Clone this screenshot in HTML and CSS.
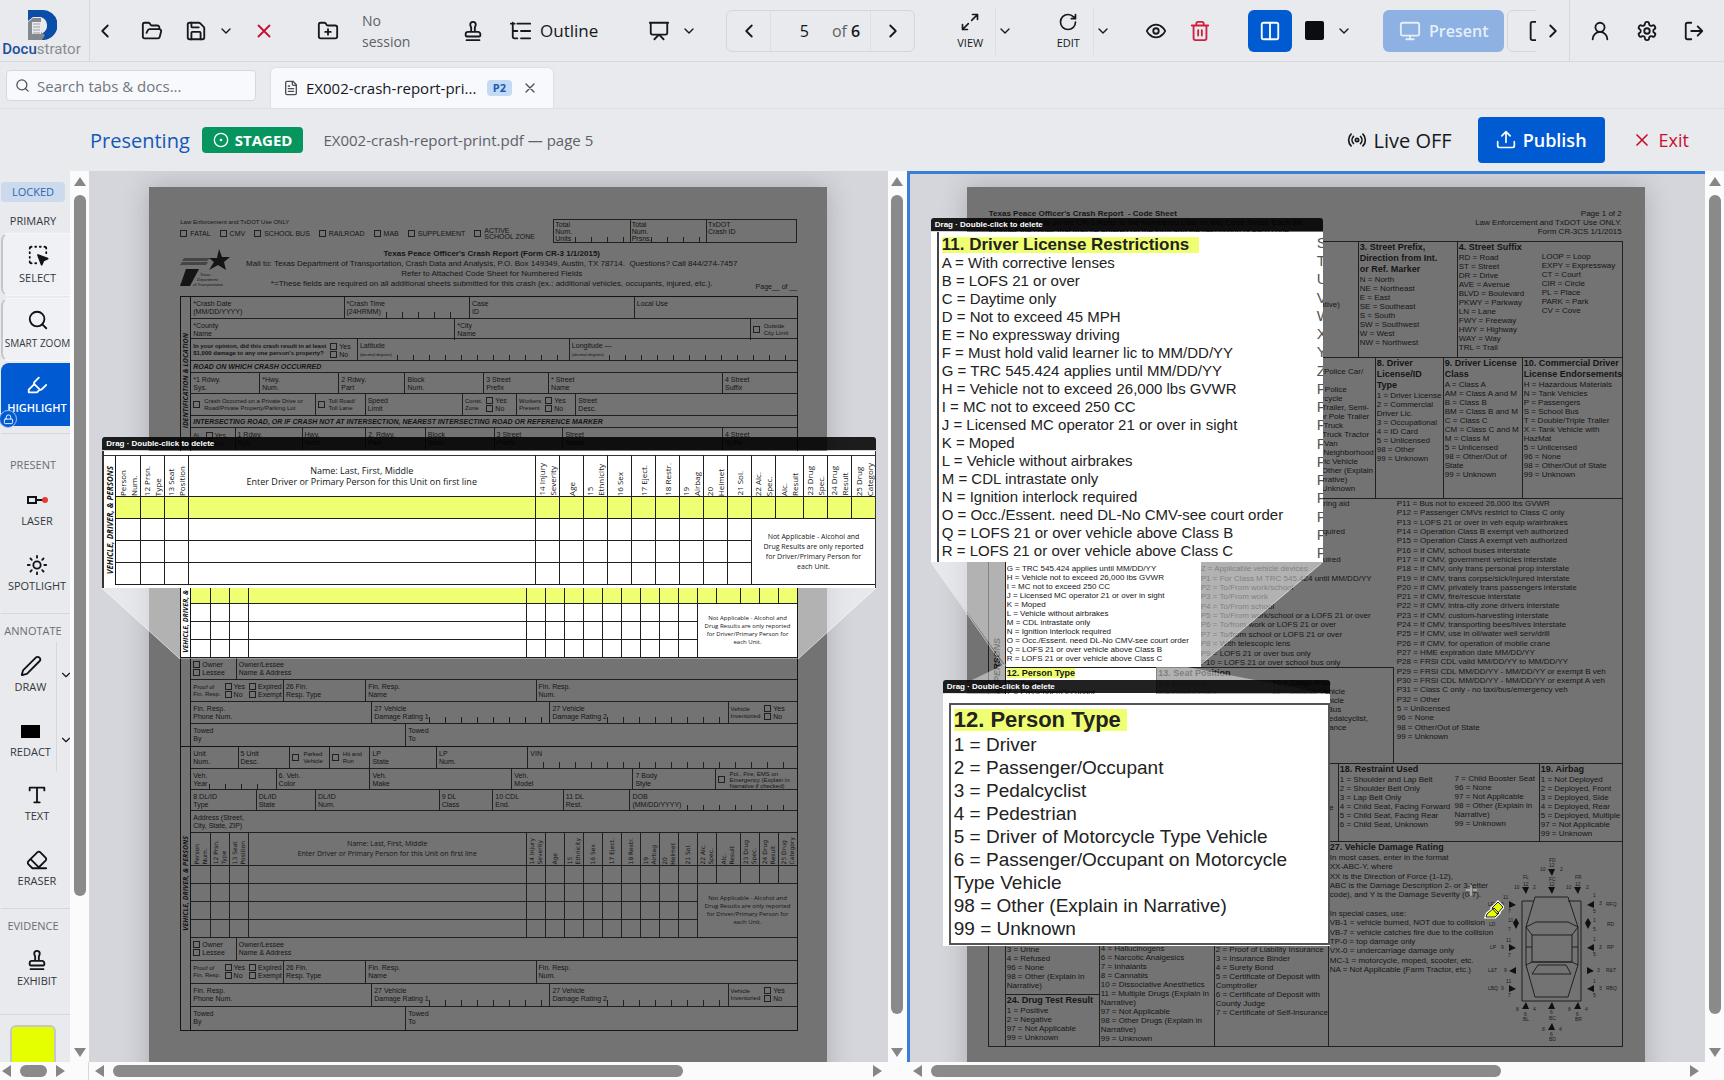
FILE: index.html
```html
<!DOCTYPE html>
<html lang="en">
<head>
    <meta charset="UTF-8">
    <meta name="viewport" content="width=device-width, initial-scale=1.0">
    <title>Docustrator</title>
    <link rel="stylesheet" href="styles.css">
</head>
<body>

<!-- icon sprite -->
<svg class="sprite" aria-hidden="true">
    <symbol id="i-left" viewBox="0 0 24 24"><path d="m15 18-6-6 6-6"/></symbol>
    <symbol id="i-right" viewBox="0 0 24 24"><path d="m9 18 6-6-6-6"/></symbol>
    <symbol id="i-down" viewBox="0 0 24 24"><path d="m6 9 6 6 6-6"/></symbol>
    <symbol id="i-x" viewBox="0 0 24 24"><path d="M18 6 6 18M6 6l12 12"/></symbol>
    <symbol id="i-open" viewBox="0 0 24 24"><path d="m6 14 1.5-2.9A2 2 0 0 1 9.240 10H20a2 2 0 0 1 1.940 2.500l-1.540 6a2 2 0 0 1-1.950 1.500H4a2 2 0 0 1-2-2V5a2 2 0 0 1 2-2h3.900a2 2 0 0 1 1.690.9l.81 1.200a2 2 0 0 0 1.670.9H18a2 2 0 0 1 2 2v2"/></symbol>
    <symbol id="i-save" viewBox="0 0 24 24"><path d="M15.200 3a2 2 0 0 1 1.400.6l3.800 3.800a2 2 0 0 1 .6 1.400V19a2 2 0 0 1-2 2H5a2 2 0 0 1-2-2V5a2 2 0 0 1 2-2z"/><path d="M17 21v-7a1 1 0 0 0-1-1H8a1 1 0 0 0-1 1v7M7 3v4a1 1 0 0 0 1 1h7"/></symbol>
    <symbol id="i-newfolder" viewBox="0 0 24 24"><path d="M12 10v6M9 13h6M20 20a2 2 0 0 0 2-2V8a2 2 0 0 0-2-2h-7.900a2 2 0 0 1-1.690-.9L9.600 3.900A2 2 0 0 0 7.930 3H4a2 2 0 0 0-2 2v13a2 2 0 0 0 2 2Z"/></symbol>
    <symbol id="i-stamp" viewBox="0 0 24 24"><path d="M5 22h14M19.270 13.730A2.500 2.500 0 0 0 17.500 13h-11A2.500 2.500 0 0 0 4 15.500V17a1 1 0 0 0 1 1h14a1 1 0 0 0 1-1v-1.500c0-.66-.26-1.300-.73-1.770ZM14 13V8.500C14 7 15 7 15 5a3 3 0 0 0-3-3c-1.660 0-3 1-3 3s1 2 1 3.500V13"/></symbol>
    <symbol id="i-tree" viewBox="0 0 24 24"><path d="M22 12H12M22 4H8M22 20H12M3 3v7c0 1.100.9 2 2 2h3M3 10v8c0 1.100.9 2 2 2h3M1 4h4"/></symbol>
    <symbol id="i-board" viewBox="0 0 24 24"><path d="M2 3h20M21 3v11a2 2 0 0 1-2 2H5a2 2 0 0 1-2-2V3M7 21l5-5 5 5"/></symbol>
    <symbol id="i-expand" viewBox="0 0 24 24"><path d="M15 3h6v6M9 21H3v-6M21 3l-7 7M3 21l7-7"/></symbol>
    <symbol id="i-rotate" viewBox="0 0 24 24"><path d="M21 12a9 9 0 1 1-9-9c2.520 0 4.930 1 6.740 2.740L21 8M21 3v5h-5"/></symbol>
    <symbol id="i-eye" viewBox="0 0 24 24"><path d="M2 12s3-7 10-7 10 7 10 7-3 7-10 7-10-7-10-7Z"/><circle cx="12" cy="12" r="3"/></symbol>
    <symbol id="i-trash" viewBox="0 0 24 24"><path d="M3 6h18M19 6v14a2 2 0 0 1-2 2H7a2 2 0 0 1-2-2V6M8 6V4a2 2 0 0 1 2-2h4a2 2 0 0 1 2 2v2M10 11v6M14 11v6"/></symbol>
    <symbol id="i-columns" viewBox="0 0 24 24"><rect x="3" y="3" width="18" height="18" rx="2"/><path d="M12 3v18"/></symbol>
    <symbol id="i-monitor" viewBox="0 0 24 24"><rect x="2" y="3" width="20" height="14" rx="2"/><path d="M8 21h8M12 17v4"/></symbol>
    <symbol id="i-tablet" viewBox="0 0 24 24"><rect x="4" y="2" width="16" height="20" rx="2"/><path d="M12 18h.01"/></symbol>
    <symbol id="i-user" viewBox="0 0 24 24"><circle cx="12" cy="8" r="5"/><path d="M20 21a8 8 0 0 0-16 0"/></symbol>
    <symbol id="i-gear" viewBox="0 0 24 24"><path d="M12.220 2h-.44a2 2 0 0 0-2 2v.18a2 2 0 0 1-1 1.730l-.43.25a2 2 0 0 1-2 0l-.15-.08a2 2 0 0 0-2.730.73l-.22.38a2 2 0 0 0 .73 2.730l.15.1a2 2 0 0 1 1 1.720v.51a2 2 0 0 1-1 1.740l-.15.09a2 2 0 0 0-.73 2.730l.22.38a2 2 0 0 0 2.730.73l.15-.08a2 2 0 0 1 2 0l.43.25a2 2 0 0 1 1 1.730V20a2 2 0 0 0 2 2h.44a2 2 0 0 0 2-2v-.18a2 2 0 0 1 1-1.730l.43-.25a2 2 0 0 1 2 0l.15.08a2 2 0 0 0 2.730-.73l.22-.39a2 2 0 0 0-.73-2.730l-.15-.08a2 2 0 0 1-1-1.740v-.5a2 2 0 0 1 1-1.740l.15-.09a2 2 0 0 0 .73-2.730l-.22-.38a2 2 0 0 0-2.730-.73l-.15.08a2 2 0 0 1-2 0l-.43-.25a2 2 0 0 1-1-1.730V4a2 2 0 0 0-2-2z"/><circle cx="12" cy="12" r="3"/></symbol>
    <symbol id="i-logout" viewBox="0 0 24 24"><path d="M9 21H5a2 2 0 0 1-2-2V5a2 2 0 0 1 2-2h4M16 17l5-5-5-5M21 12H9"/></symbol>
    <symbol id="i-search" viewBox="0 0 24 24"><circle cx="11" cy="11" r="8"/><path d="m21 21-4.300-4.300"/></symbol>
    <symbol id="i-file" viewBox="0 0 24 24"><path d="M15 2H6a2 2 0 0 0-2 2v16a2 2 0 0 0 2 2h12a2 2 0 0 0 2-2V7ZM14 2v4a2 2 0 0 0 2 2h4M10 9H8M16 13H8M16 17H8"/></symbol>
    <symbol id="i-dot" viewBox="0 0 24 24"><circle cx="12" cy="12" r="10"/><circle cx="12" cy="12" r="1"/></symbol>
    <symbol id="i-radio" viewBox="0 0 24 24"><path d="M4.900 19.100C1 15.200 1 8.800 4.900 4.900M7.800 16.200c-2.300-2.300-2.300-6.100 0-8.500M16.200 7.800c2.300 2.300 2.300 6.100 0 8.500M19.100 4.900C23 8.800 23 15.100 19.100 19"/><circle cx="12" cy="12" r="2"/></symbol>
    <symbol id="i-upload" viewBox="0 0 24 24"><path d="M2 14v5a2 2 0 0 0 2 2h16a2 2 0 0 0 2-2v-5M17 7l-5-5-5 5M12 2v13"/></symbol>
    <symbol id="i-select" viewBox="0 0 24 24"><path d="M5 3a2 2 0 0 0-2 2M19 3a2 2 0 0 1 2 2M5 21a2 2 0 0 1-2-2M9 3h1M14 3h1M3 9v1M3 14v1M21 9v1M9 21h1"/><path class="solid" d="m12 12 10.500 4-4.500 1.800L16 22.500z"/></symbol>
    <symbol id="i-highlight" viewBox="0 0 24 24"><path d="m9 11-6 6v3h9l3-3M22 12l-4.600 4.600a2 2 0 0 1-2.800 0l-5.200-5.200a2 2 0 0 1 0-2.800L14 4"/></symbol>
    <symbol id="i-lock" viewBox="0 0 24 24"><rect x="3" y="11" width="18" height="10" rx="2"/><path d="M7 11V7a5 5 0 0 1 10 0v4"/></symbol>
    <symbol id="i-sun" viewBox="0 0 24 24"><circle cx="12" cy="12" r="4"/><path d="M12 2v2M12 20v2M4.900 4.900l1.400 1.400M17.700 17.700l1.400 1.400M2 12h2M20 12h2M6.300 17.700l-1.400 1.400M19.100 4.900l-1.400 1.400"/></symbol>
    <symbol id="i-pencil" viewBox="0 0 24 24"><path d="M21.200 6.800a2.800 2.800 0 0 0-4-4L3.800 16.200a2 2 0 0 0-.5.8L2 21.400a.5.5 0 0 0 .6.6L7 20.700a2 2 0 0 0 .8-.5z"/></symbol>
    <symbol id="i-type" viewBox="0 0 24 24"><path d="M4 7V4h16v3M9 20h6M12 4v16"/></symbol>
    <symbol id="i-eraser" viewBox="0 0 24 24"><path d="m7 21-4.300-4.300c-1-1-1-2.500 0-3.400l9.600-9.600c1-1 2.500-1 3.400 0l5.600 5.600c1 1 1 2.500 0 3.400L13 21M22 21H7M5 11l9 9"/></symbol>
</svg>

<div class="app">

<header class="topbar">
    <a class="brand" href="#">
        <svg class="brand-mark" viewBox="0 0 30 32">
            <path d="M1 1h13a15 15 0 0 1 3 30h-5l4-7a9 9 0 0 0-2-16H6L1 12z" fill="#0b4ea8"/>
            <path d="M1 13 6 9h8v14l4 3-3 5H1z" fill="#85898e"/>
            <path d="M5 13h9v12H5z" fill="#e8eaed"/>
            <path d="M6 15h7M6 18h7M6 21h7M6 24h7" stroke="#9a9ea3" stroke-width="1"/>
        </svg>
        <span class="brand-name"><b>Docu</b>strator</span>
    </a>
    <div class="tools">
        <button class="tool narrow" aria-label="Back"><svg class="icon"><use href="#i-left"/></svg></button>
        <div class="group">
            <button class="tool" aria-label="Open"><svg class="icon"><use href="#i-open"/></svg></button>
            <button class="tool" aria-label="Save"><svg class="icon"><use href="#i-save"/></svg></button>
            <button class="caret" aria-label="Save options"><svg class="icon"><use href="#i-down"/></svg></button>
            <button class="tool danger close-doc" aria-label="Close"><svg class="icon"><use href="#i-x"/></svg></button>
        </div>
        <div class="group">
            <button class="tool" aria-label="New session"><svg class="icon"><use href="#i-newfolder"/></svg></button>
            <span class="session">No session</span>
        </div>
        <div class="group wide">
            <button class="tool" aria-label="Stamp"><svg class="icon"><use href="#i-stamp"/></svg></button>
            <button class="outline-btn"><svg class="icon"><use href="#i-tree"/></svg>Outline</button>
        </div>
        <div class="group wide">
            <button class="tool" aria-label="Presentation"><svg class="icon"><use href="#i-board"/></svg></button>
            <button class="caret" aria-label="Presentation options"><svg class="icon"><use href="#i-down"/></svg></button>
        </div>
        <div class="pager">
            <button aria-label="Previous page"><svg class="icon"><use href="#i-left"/></svg></button>
            <div class="pager-value"><input type="text" value="5" aria-label="Page"><span>of <b>6</b></span></div>
            <button aria-label="Next page"><svg class="icon"><use href="#i-right"/></svg></button>
        </div>
        <div class="group stacked-group">
            <button class="stacked"><svg class="icon"><use href="#i-expand"/></svg>VIEW</button>
            <button class="caret ruled" aria-label="View options"><svg class="icon"><use href="#i-down"/></svg></button>
        </div>
        <div class="group stacked-group">
            <button class="stacked"><svg class="icon"><use href="#i-rotate"/></svg>EDIT</button>
            <button class="caret ruled" aria-label="Edit options"><svg class="icon"><use href="#i-down"/></svg></button>
        </div>
        <div class="group spaced">
            <button class="tool" aria-label="Show"><svg class="icon"><use href="#i-eye"/></svg></button>
            <button class="tool danger trash" aria-label="Delete"><svg class="icon"><use href="#i-trash"/></svg></button>
        </div>
        <div class="group spaced">
            <button class="tool active" aria-label="Split view"><svg class="icon"><use href="#i-columns"/></svg></button>
            <button class="tool" aria-label="Blackout"><span class="black-square"></span></button>
            <button class="caret" aria-label="Blackout options"><svg class="icon"><use href="#i-down"/></svg></button>
        </div>
        <div class="group clip">
            <button class="present-btn" disabled><svg class="icon"><use href="#i-monitor"/></svg>Present</button>
            <button class="tablet-btn" aria-label="Tablet"><svg class="icon"><use href="#i-tablet"/></svg></button>
        </div>
    </div>
    <button class="tool narrow" aria-label="More tools"><svg class="icon"><use href="#i-right"/></svg></button>
    <nav class="account">
        <button class="tool" aria-label="Account"><svg class="icon"><use href="#i-user"/></svg></button>
        <button class="tool" aria-label="Settings"><svg class="icon"><use href="#i-gear"/></svg></button>
        <button class="tool" aria-label="Log out"><svg class="icon"><use href="#i-logout"/></svg></button>
    </nav>
</header>

<div class="tabs">
    <label class="search"><svg class="icon"><use href="#i-search"/></svg><input type="text" placeholder="Search tabs &amp; docs..." aria-label="Search tabs and docs"></label>
    <div class="tab">
        <svg class="icon"><use href="#i-file"/></svg>
        <a href="#">EX002-crash-report-pri...</a>
        <span class="tab-badge">P2</span>
        <button aria-label="Close tab"><svg class="icon"><use href="#i-x"/></svg></button>
    </div>
</div>

<div class="presenting">
    <strong>Presenting</strong>
    <span class="staged"><svg class="icon"><use href="#i-dot"/></svg>STAGED</span>
    <span class="doc-name">EX002-crash-report-print.pdf — page 5</span>
    <button class="live"><svg class="icon"><use href="#i-radio"/></svg>Live OFF</button>
    <button class="publish"><svg class="icon"><use href="#i-upload"/></svg>Publish</button>
    <button class="exit"><svg class="icon"><use href="#i-x"/></svg>Exit</button>
</div>

<main class="workspace">

    <!-- tool palette -->
    <aside class="palette">
        <div class="palette-body">
            <span class="locked">LOCKED</span>
            <h2 class="primary">PRIMARY</h2>
            <button class="pal raised"><svg class="icon"><use href="#i-select"/></svg>SELECT</button>
            <button class="pal raised small-label"><svg class="icon"><use href="#i-search"/></svg>SMART ZOOM</button>
            <button class="pal on"><svg class="icon"><use href="#i-highlight"/></svg>HIGHLIGHT<span class="lock"><svg class="icon"><use href="#i-lock"/></svg></span></button>
            <section>
                <h2 class="tall">PRESENT</h2>
                <button class="pal"><svg class="laser" viewBox="0 0 22 22"><rect x="2" y="8" width="8" height="6"/><path d="M10 11h7"/><circle cx="19" cy="11" r="2"/></svg>LASER</button>
                <button class="pal"><svg class="icon"><use href="#i-sun"/></svg>SPOTLIGHT</button>
            </section>
            <section>
                <h2>ANNOTATE</h2>
                <div class="split"><button class="pal"><svg class="icon"><use href="#i-pencil"/></svg>DRAW</button><button class="pal-caret" aria-label="Draw options"><svg class="icon"><use href="#i-down"/></svg></button></div>
                <div class="split"><button class="pal"><span class="redact"></span>REDACT</button><button class="pal-caret" aria-label="Redact options"><svg class="icon"><use href="#i-down"/></svg></button></div>
                <button class="pal"><svg class="icon"><use href="#i-type"/></svg>TEXT</button>
                <button class="pal"><svg class="icon"><use href="#i-eraser"/></svg>ERASER</button>
            </section>
            <section>
                <h2>EVIDENCE</h2>
                <button class="pal"><svg class="icon"><use href="#i-stamp"/></svg>EXHIBIT</button>
            </section>
            <section class="swatches"><button class="swatch" aria-label="Colour"></button></section>
        </div>
        <div class="bar vertical"><i></i><div class="track"><span class="thumb palette-y"></span></div><i></i></div>
        <div class="bar horizontal small"><i></i><div class="track"><span class="thumb palette-x"></span></div><i></i></div>
    </aside>

    <!-- left pane: crash report form -->
    <section class="pane">
        <div class="stage">
            <article class="sheet form">
                <div class="form-head">
                    <div class="use-only">
                        <div>
                            <p>Law Enforcement and TxDOT Use ONLY</p>
                            <div class="flags">
                                <label><input type="checkbox">FATAL</label>
                                <label><input type="checkbox">CMV</label>
                                <label><input type="checkbox">SCHOOL BUS</label>
                                <label><input type="checkbox">RAILROAD</label>
                                <label><input type="checkbox">MAB</label>
                                <label><input type="checkbox">SUPPLEMENT</label>
                                <label><input type="checkbox"><span>ACTIVE<br>SCHOOL ZONE</span></label>
                            </div>
                        </div>
                        <div class="totals">
                            <div>Total<br>Num.<br>Units<span class="ticks"></span></div>
                            <div>Total<br>Num.<br>Prsns.<span class="ticks"></span></div>
                            <div>TxDOT<br>Crash ID</div>
                        </div>
                    </div>
                    <div class="title">
                        <svg class="txdot" viewBox="0 0 52 38">
                            <path d="M4 9h26l-3 3H2zM2 13h26l-2 3H0z" fill="#454545"/>
                            <path d="m39 0 3 8h8l-6 5 2 8-8-5-9 5 5-8-5-4h8z" fill="#151515"/>
                            <path d="M6 20h13l-9 17H0z" fill="#151515"/>
                            <text x="20" y="27">Texas</text><text x="17" y="32">Department</text><text x="13" y="37">of Transportation</text>
                        </svg>
                        <div class="title-text">
                            <h1>Texas Peace Officer's Crash Report (Form CR-3 1/1/2015)</h1>
                            <p>Mail to: Texas Department of Transportation, Crash Data and Analysis, P.O. Box 149349, Austin, TX 78714.&nbsp; Questions? Call 844/274-7457</p>
                            <p>Refer to Attached Code Sheet for Numbered Fields</p>
                            <p>*=These fields are required on all additional sheets submitted for this crash (ex.: additional vehicles, occupants, injured, etc.).</p>
                        </div>
                        <span class="page-of">Page__ of __</span>
                    </div>
                </div>

                <div class="frame">
                    <div class="part ident">
                        <div class="spine"><span>IDENTIFICATION &amp; LOCATION</span></div>
                        <div class="rows">
                            <div class="row r-date"><div>*Crash Date<br>(MM/DD/YYYY)</div><div>*Crash Time<br>(24HRMM)<span class="ticks"></span></div><div>Case<br>ID</div><div>Local Use</div></div>
                            <div class="row r-county"><div>*County<br>Name</div><div>*City<br>Name</div><div class="tight"><input type="checkbox" aria-label="Outside city limit"><span>Outside<br>City Limit</span></div></div>
                            <div class="row r-opinion"><div class="tight"><b>In your opinion, did this crash result in at least<br>$1,000 damage to any one person's property?</b><span class="yesno"><label><input type="checkbox">Yes</label><label><input type="checkbox">No</label></span></div><div>Latitude<br><small>(decimal degrees)</small><span class="ticks"></span></div><div>Longitude —<br><small>(decimal degrees)</small><span class="ticks"></span></div></div>
                            <h3>ROAD ON WHICH CRASH OCCURRED</h3>
                            <div class="row r-rdwy"><div>*1 Rdwy.<br>Sys.</div><div>*Hwy.<br>Num.</div><div>2 Rdwy.<br>Part</div><div>Block<br>Num.</div><div>3 Street<br>Prefix</div><div>* Street<br>Name</div><div>4 Street<br>Suffix</div></div>
                            <div class="row r-private"><div class="tight"><input type="checkbox" aria-label="Private drive"><span>Crash Occurred on a Private Drive or<br>Road/Private Property/Parking Lot</span></div><div class="tight"><input type="checkbox" aria-label="Toll road"><span>Toll Road/<br>Toll Lane</span></div><div>Speed<br>Limit</div><div class="tight"><span>Const.<br>Zone</span><span class="yesno"><label><input type="checkbox">Yes</label><label><input type="checkbox">No</label></span></div><div class="tight"><span>Workers<br>Present</span><span class="yesno"><label><input type="checkbox">Yes</label><label><input type="checkbox">No</label></span></div><div>Street<br>Desc.</div></div>
                            <h3>INTERSECTING ROAD, OR IF CRASH NOT AT INTERSECTION, NEAREST INTERSECTING ROAD OR REFERENCE MARKER</h3>
                            <div class="row r-at"><div class="tight"><span>At<br>Int.</span><span class="yesno"><label><input type="checkbox">Yes</label><label><input type="checkbox">No</label></span></div><div>1 Rdwy.<br>Sys.</div><div>Hwy.<br>Num.</div><div>2. Rdwy.<br>Part</div><div>Block<br>Num.</div><div>3 Street<br>Prefix</div><div>Street<br>Name</div><div>4 Street<br>Suffix</div></div>
                        </div>
                    </div>

                    <div class="part lit">
                        <div class="spine"><span>VEHICLE, DRIVER, &amp; PERSONS</span></div>
                        <div class="rows" data-clone="persons"></div>
                    </div>
                    <div class="part">
                        <div class="spine"></div>
                        <div class="rows" data-clone="finance"></div>
                    </div>

                    <div class="part vehicle">
                        <div class="spine"><span>VEHICLE, DRIVER, &amp; PERSONS</span></div>
                        <div class="rows">
                            <div class="row r-unit"><div>Unit<br>Num.</div><div>5 Unit<br>Desc.</div><div class="tight"><input type="checkbox" aria-label="Parked vehicle"><span>Parked<br>Vehicle</span></div><div class="tight"><input type="checkbox" aria-label="Hit and run"><span>Hit and<br>Run</span></div><div>LP<br>State</div><div>LP<br>Num.</div><div>VIN<span class="ticks"></span></div></div>
                            <div class="row r-veh"><div>Veh.<br>Year<span class="ticks"></span></div><div>6. Veh.<br>Color</div><div>Veh.<br>Make</div><div>Veh.<br>Model</div><div>7 Body<br>Style</div><div class="tight"><input type="checkbox" aria-label="Emergency"><span>Pol., Fire, EMS on<br>Emergency (Explain in<br>Narrative if checked)</span></div></div>
                            <div class="row r-dl"><div>8 DL/ID<br>Type</div><div>DL/ID<br>State</div><div>DL/ID<br>Num.</div><div>9 DL<br>Class</div><div>10 CDL<br>End.</div><div>11 DL<br>Rest.</div><div>DOB<br>(MM/DD/YYYY)<span class="ticks"></span></div></div>
                            <div class="row"><div>Address (Street,<br>City, State, ZIP)</div></div>
                            <div data-clone="persons"></div>
                            <div data-clone="finance"></div>
                        </div>
                    </div>
                </div>

                <!-- zoom callout and its beam -->
                <svg class="beam beam-form" viewBox="0 0 774 71"><path d="M0 0H78V71ZM774 0H696V71Z"/><path class="edge" d="M0 0 78 71H696L774 0"/></svg>
                <div class="callout callout-form">
                    <header>Drag · Double-click to delete</header>
                    <div class="callout-body">
                        <div class="spine"><span>VEHICLE, DRIVER, &amp; PERSONS</span></div>
                        <div class="rows" data-clone="persons"></div>
                    </div>
                </div>
            </article>
        </div>
        <div class="bar vertical"><i></i><div class="track"><span class="thumb pane-y"></span></div><i></i></div>
        <div class="bar horizontal"><i></i><div class="track"><span class="thumb pane-x"></span></div><i></i></div>
    </section>

    <!-- right pane: code sheet -->
    <section class="pane focused">
        <div class="stage">
            <article class="sheet codes">
                <div class="codes-head">
                    <p><b>Texas Peace Officer's Crash Report &nbsp;- Code Sheet</b><br>Numbered Fields on the CR-3 Refer to the Numbered Lists on this Code Sheet. Each list<br>includes the codes that may be entered on the form and the description of each code.</p>
                    <p>Page 1 of 2<br>Law Enforcement and TxDOT Use ONLY.<br>Form CR-3CS 1/1/2015</p>
                </div>
                <div class="code-frame">
                    <div class="code-spine"><span>VEHICLE, DRIVER, AND PERSONS</span></div>
                    <div class="code-rows">
                        <div class="code-row c-street">
                            <div class="cell explain">Narrative)</div>
                            <div class="cell"><h4>3. Street Prefix,<br>Direction from Int.<br>or Ref. Marker</h4>N = North<br>NE = Northeast<br>E = East<br>SE = Southeast<br>S = South<br>SW = Southwest<br>W = West<br>NW = Northwest</div>
                            <div class="cell pair"><div><h4>4. Street Suffix</h4>RD = Road<br>ST = Street<br>DR = Drive<br>AVE = Avenue<br>BLVD = Boulevard<br>PKWY = Parkway<br>LN = Lane<br>FWY = Freeway<br>HWY = Highway<br>WAY = Way<br>TRL = Trail</div><div class="second">LOOP = Loop<br>EXPY = Expressway<br>CT = Court<br>CIR = Circle<br>PL = Place<br>PARK = Park<br>CV = Cove</div></div>
                        </div>
                        <div class="code-row c-license">
                            <div class="cell body-style">PC = Police Car/<br>Truck<br>PM = Police<br>Motorcycle<br>TL = Trailer, Semi-<br>Trlr, or Pole Trailer<br>TR = Truck<br>TT = Truck Tractor<br>VN = Van<br>EV = Neighborhood<br>Electric Vehicle<br>98 = Other (Explain<br>in Narrative)<br>99 = Unknown</div>
                            <div class="cell"><h4>8. Driver<br>License/ID<br>Type</h4>1 = Driver License<br>2 = Commercial<br>Driver Lic.<br>3 = Occupational<br>4 = ID Card<br>5 = Unlicensed<br>98 = Other<br>99 = Unknown</div>
                            <div class="cell"><h4>9. Driver License<br>Class</h4>A = Class A<br>AM = Class A and M<br>B = Class B<br>BM = Class B and M<br>C = Class C<br>CM = Class C and M<br>M = Class M<br>5 = Unlicensed<br>98 = Other/Out of<br>State<br>99 = Unknown</div>
                            <div class="cell"><h4>10. Commercial Driver<br>License Endorsements</h4>H = Hazardous Materials<br>N = Tank Vehicles<br>P = Passengers<br>S = School Bus<br>T = Double/Triple Trailer<br>X = Tank Vehicle with<br>HazMat<br>5 = Unlicensed<br>96 = None<br>98 = Other/Out of State<br>99 = Unknown</div>
                        </div>
                        <div class="code-row c-restrict">
                            <div class="restrict-left">
                                <div class="restrict-top">
                                    <div class="cell bright"><h4>11. Driver License Restrictions</h4>A = With corrective lenses<br>B = LOFS 21 or over<br>C = Daytime only<br>D = Not to exceed 45 MPH<br>E = No expressway driving<br>F = Must hold valid learner lic to MM/DD/YY<br>G = TRC 545.424 applies until MM/DD/YY<br>H = Vehicle not to exceed 26,000 lbs GVWR<br>I = MC not to exceed 250 CC<br>J = Licensed MC operator 21 or over in sight<br>K = Moped<br>L = Vehicle without airbrakes<br>M = CDL intrastate only<br>N = Ignition interlock required<br>O = Occ./Essent. need DL-No CMV-see court order<br>Q = LOFS 21 or over vehicle above Class B<br>R = LOFS 21 or over vehicle above Class C</div>
                                    <ul class="spread">
                                        <li>S = Outside rearview mirror or hearing aid</li><li>T = Automatic transmission</li><li>U = Applicable prosthetic devices</li><li>V = Medical Variance document required</li><li>W = Power steering</li><li>X = Vehicle restriction</li><li>Y = Valid TX vision or limb cert required</li><li>Z = Applicable vehicle devices</li><li>P1 = For Class M TRC 545.424 until MM/DD/YY</li><li>P2 = To/From work/school</li><li>P3 = To/From work</li><li>P4 = To/From school</li><li>P5 = To/From work/school or a LOFS 21 or over</li><li>P6 = To/from work or LOFS 21 or over</li><li>P7 = To/from school or LOFS 21 or over</li><li>P8 = With telescopic lens</li><li>P9 = LOFS 21 or over bus only</li><li>P10 = LOFS 21 or over school bus only</li>
                                    </ul>
                                </div>
                                <div class="restrict-bottom">
                                    <div class="cell bright"><h4><mark>12. Person Type</mark></h4>1 = Driver<br>2 = Passenger/Occupant</div>
                                    <div class="cell pair"><div><h4>13. Seat Position</h4>1 = Front Left<br>2 = Front Center</div><div class="second">10 = Cargo Area<br>11 = Outside Vehicle<br>12 = Trailing Vehicle<br>13 = Other in a Bus<br>14 = Pass. on Pedalcyclist,<br>or other Conveyance<br>98 = (Explain in</div></div>
                                </div>
                            </div>
                            <ul class="spread p-list">
                                <li>P11 = Bus not to exceed 26,000 lbs GVWR</li><li>P12 = Passenger CMVs restrict to Class C only</li><li>P13 = LOFS 21 or over in veh equip w/airbrakes</li><li>P14 = Operation Class B exempt veh authorized</li><li>P15 = Operation Class A exempt veh authorized</li><li>P16 = If CMV, school buses interstate</li><li>P17 = If CMV, government vehicles interstate</li><li>P18 = If CMV, only trans personal prop interstate</li><li>P19 = If CMV, trans corpse/sick/injured interstate</li><li>P20 = If CMV, privately trans passengers interstate</li><li>P21 = If CMV, fire/rescue interstate</li><li>P22 = If CMV, intra-city zone drivers interstate</li><li>P23 = If CMV, custom-harvesting interstate</li><li>P24 = If CMV, transporting bees/hives interstate</li><li>P25 = If CMV, use in oil/water well serv/drill</li><li>P26 = If CMV, for operation of mobile crane</li><li>P27 = HME expiration date MM/DD/YY</li><li>P28 = FRSI CDL valid MM/DD/YY to MM/DD/YY</li><li>P29 = FRSI CDL MM/DD/YY - MM/DD/YY or exempt B veh</li><li>P30 = FRSI CDL MM/DD/YY - MM/DD/YY or exempt A veh</li><li>P31 = Class C only - no taxi/bus/emergency veh</li><li>P32 = Other</li><li>5 = Unlicensed</li><li>96 = None</li><li>98 = Other/Out of State</li><li>99 = Unknown</li>
                            </ul>
                        </div>
                        <div class="code-row c-restraint">
                            <div class="cell tail">Vehicle</div>
                            <div class="cell pair"><div><h4>18. Restraint Used</h4>1 = Shoulder and Lap Belt<br>2 = Shoulder Belt Only<br>3 = Lap Belt Only<br>4 = Child Seat, Facing Forward<br>5 = Child Seat, Facing Rear<br>6 = Child Seat, Unknown</div><div class="second">7 = Child Booster Seat<br>96 = None<br>97 = Not Applicable<br>98 = Other (Explain in<br>Narrative)<br>99 = Unknown</div></div>
                            <div class="cell"><h4>19. Airbag</h4>1 = Not Deployed<br>2 = Deployed, Front<br>3 = Deployed, Side<br>4 = Deployed, Rear<br>5 = Deployed, Multiple<br>97 = Not Applicable<br>99 = Unknown</div>
                        </div>
                        <div class="code-row c-damage">
                            <div class="drug">
                                <div class="cell bottom"><p>3 = Urine<br>4 = Refused<br>96 = None<br>98 = Other (Explain in<br>Narrative)</p></div>
                                <div class="cell"><h4>24. Drug Test Result</h4>1 = Positive<br>2 = Negative<br>97 = Not Applicable<br>99 = Unknown</div>
                            </div>
                            <div class="cell bottom"><p>4 = Hallucinogens<br>6 = Narcotic Analgesics<br>7 = Inhalants<br>8 = Cannabis<br>10 = Dissociative Anesthetics<br>11 = Multiple Drugs (Explain in<br>Narrative)<br>97 = Not Applicable<br>98 = Other Drugs (Explain in<br>Narrative)<br>99 = Unknown</p></div>
                            <div class="cell bottom insurance"><p>2 = Proof of Liability Insurance<br>3 = Insurance Binder<br>4 = Surety Bond<br>5 = Certificate of Deposit with<br>Comptroller<br>6 = Certificate of Deposit with<br>County Judge<br>7 = Certificate of Self-Insurance</p></div>
                            <div class="cell damage">
                                <h4>27. Vehicle Damage Rating</h4>
                                <ul class="spread">
                                    <li>In most cases, enter in the format</li><li>XX-ABC-Y, where</li><li>XX is the Direction of Force (1-12),</li><li>ABC is the Damage Description 2- or 3-letter</li><li>code), and Y is the Damage Severity (0-7).</li><li>&nbsp;</li><li>In special cases, use:</li><li>VB-1 = vehicle burned, NOT due to collision</li><li>VB-7 = vehicle catches fire due to the collision</li><li>TP-0 = top damage only</li><li>VX-0 = undercarriage damage only</li><li>MC-1 = motorcycle, moped, scooter, etc.</li><li>NA = Not Applicable (Farm Tractor, etc.)</li>
                                </ul>
                                <svg class="car" viewBox="0 0 132 190">
                                    <g class="car-lines">
                                        <path d="M46 44H34V144H93V44H80M47 40H80L90 70V108L80 140H47L38 108V70ZM38 70 48 65H80L90 70 84 78H44ZM44 78V105H84V78M44 105 38 108M44 105H84L90 108M50 108H78L83 117H44ZM38 90H44M84 90H90"/>
                                    </g>
                                    <g class="car-arrows">
                                        <path d="M34 30h7l-3 7zM60 30h7l-3 7zM86 30h7l-3 7zM60 12h7l-3 7zM34 152h7l-3-7zM60 152h7l-3-7zM86 152h7l-3-7zM60 173h7l-3-7zM21 44v7l7-3zM21 87v7l7-3zM21 128v7l7-3zM28 110v7l-7-3zM106 44v7l-7-3zM106 87v7l-7-3zM106 128v7l-7-3zM99 110v7l7-3zM25 66l3-5 3 5-3 6zM97 66l3-5 3 5-3 6z"/>
                                    </g>
                                    <g class="car-text">
                                        <text x="61" y="5">FD</text><text x="52" y="14">10</text><text x="61" y="10">12</text><text x="72" y="14">2</text><text x="35" y="22">FL</text><text x="61" y="24">FC</text><text x="87" y="22">FR</text>
                                        <text x="26" y="32">10</text><text x="35" y="29">12</text><text x="45" y="32">2</text><text x="61" y="29">12</text><text x="78" y="32">10</text><text x="87" y="29">12</text><text x="98" y="32">2</text>
                                        <text x="0" y="49">LFQ</text><text x="13" y="49">9</text><text x="15" y="42">11</text><text x="20" y="56">7</text><text x="1" y="69">LD</text><text x="20" y="65">11</text><text x="20" y="74">7</text>
                                        <text x="2" y="92">LP</text><text x="13" y="92">9</text><text x="18" y="85">11</text><text x="20" y="100">7</text><text x="0" y="115">L&amp;T</text><text x="16" y="115">9</text><text x="0" y="133">LBQ</text><text x="13" y="133">9</text><text x="18" y="126">11</text><text x="20" y="140">7</text>
                                        <text x="105" y="40">1</text><text x="111" y="48">3</text><text x="118" y="49">RFQ</text><text x="105" y="56">5</text><text x="105" y="65">1</text><text x="119" y="69">RD</text><text x="105" y="74">5</text><text x="105" y="84">1</text><text x="111" y="92">3</text><text x="119" y="92">RP</text><text x="105" y="99">5</text><text x="109" y="115">3</text><text x="118" y="115">R&amp;T</text><text x="105" y="126">1</text><text x="111" y="133">3</text><text x="118" y="133">RBQ</text><text x="105" y="140">5</text>
                                        <text x="28" y="154">8</text><text x="36" y="159">6</text><text x="45" y="154">4</text><text x="35" y="164">BL</text><text x="62" y="157">6</text><text x="61" y="163">BC</text><text x="80" y="154">8</text><text x="88" y="159">6</text><text x="97" y="154">4</text><text x="87" y="164">BR</text><text x="54" y="174">8</text><text x="62" y="179">6</text><text x="71" y="174">4</text><text x="61" y="184">BD</text>
                                    </g>
                                </svg>
                            </div>
                        </div>
                    </div>
                </div>

                <svg class="beam beam-codes" viewBox="0 0 398 132"><path d="M0 0H74V103ZM392 0H269V103ZM72 103 12 132H74V103ZM225 103h21L398 132H225Z"/><path class="edge" d="M0 0 72 103H269L392 0"/></svg>
                <div class="callout callout-restrict">
                    <header>Drag · Double-click to delete</header>
                    <div class="callout-body">
                        <div class="big-list"><h4><mark>11. Driver License Restrictions</mark></h4>A = With corrective lenses<br>B = LOFS 21 or over<br>C = Daytime only<br>D = Not to exceed 45 MPH<br>E = No expressway driving<br>F = Must hold valid learner lic to MM/DD/YY<br>G = TRC 545.424 applies until MM/DD/YY<br>H = Vehicle not to exceed 26,000 lbs GVWR<br>I = MC not to exceed 250 CC<br>J = Licensed MC operator 21 or over in sight<br>K = Moped<br>L = Vehicle without airbrakes<br>M = CDL intrastate only<br>N = Ignition interlock required<br>O = Occ./Essent. need DL-No CMV-see court order<br>Q = LOFS 21 or over vehicle above Class B<br>R = LOFS 21 or over vehicle above Class C</div>
                        <ul class="spread cut"><li>S</li><li>T</li><li>U</li><li>V</li><li>W</li><li>X</li><li>Y</li><li>Z</li><li>P</li><li>P</li><li>P</li><li>P</li><li>P</li><li>P</li><li>P</li><li>P</li><li>P</li><li>P</li></ul>
                    </div>
                </div>
                <div class="callout callout-person">
                    <header>Drag · Double-click to delete</header>
                    <div class="callout-body">
                        <div class="big-list"><h4><mark>12. Person Type</mark></h4>1 = Driver<br>2 = Passenger/Occupant<br>3 = Pedalcyclist<br>4 = Pedestrian<br>5 = Driver of Motorcycle Type Vehicle<br>6 = Passenger/Occupant on Motorcycle<br>Type Vehicle<br>98 = Other (Explain in Narrative)<br>99 = Unknown</div>
                    </div>
                </div>
                <svg class="pointer" viewBox="0 0 38 38"><path d="M5 0v11M0 5h4M7 5h4" stroke="#ddd" fill="none"/><path d="M21 29 28 23l5 5-4 4H20zM26 23l6-6 5 5-6 7z" fill="#e6ff00" stroke="#fff" stroke-width="3"/><path d="M21 29 28 23l5 5-4 4H20zM26 23l6-6 5 5-6 7z" fill="#e6ff00" stroke="#222"/></svg>
            </article>
        </div>
        <div class="bar vertical"><i></i><div class="track"><span class="thumb pane-y"></span></div><i></i></div>
        <div class="bar horizontal"><i></i><div class="track"><span class="thumb pane-x"></span></div><i></i></div>
    </section>
</main>
</div>

<!-- blocks that repeat on the form -->
<template id="persons">
    <table class="persons">
        <colgroup><col span="3"><col class="name"><col span="10"><col class="result"><col span="3"></colgroup>
        <thead>
            <tr>
                <th><span>Person<br>Num.</span></th><th><span>12 Prsn.<br>Type</span></th><th><span>13 Seat<br>Position</span></th>
                <th class="name-head">Name: Last, First, Middle<br>Enter Driver or Primary Person for this Unit on first line</th>
                <th><span>14 Injury<br>Severity</span></th><th><span>Age</span></th><th><span>15<br>Ethnicity</span></th><th><span>16 Sex</span></th><th><span>17 Eject.</span></th><th><span>18 Restr.</span></th><th><span>19<br>Airbag</span></th><th><span>20<br>Helmet</span></th><th><span>21 Sol.</span></th><th><span>22 Alc.<br>Spec.</span></th><th><span>Alc.<br>Result</span></th><th><span>23 Drug<br>Spec.</span></th><th><span>24 Drug<br>Result</span></th><th><span>25 Drug<br>Category</span></th>
            </tr>
        </thead>
        <tbody>
            <tr class="first"><td></td><td></td><td></td><td></td><td></td><td></td><td></td><td></td><td></td><td></td><td></td><td></td><td></td><td></td><td></td><td></td><td></td><td></td></tr>
            <tr><td></td><td></td><td></td><td></td><td></td><td></td><td></td><td></td><td></td><td></td><td></td><td></td><td></td><td class="na" colspan="5" rowspan="3">Not Applicable - Alcohol and<br>Drug Results are only reported<br>for Driver/Primary Person for<br>each Unit.</td></tr>
            <tr><td></td><td></td><td></td><td></td><td></td><td></td><td></td><td></td><td></td><td></td><td></td><td></td><td></td></tr>
            <tr><td></td><td></td><td></td><td></td><td></td><td></td><td></td><td></td><td></td><td></td><td></td><td></td><td></td></tr>
        </tbody>
    </table>
</template>
<template id="finance">
    <div class="row r-owner"><div class="tight"><span class="yesno"><label><input type="checkbox">Owner</label><label><input type="checkbox">Lessee</label></span></div><div>Owner/Lessee<br>Name &amp; Address</div></div>
    <div class="row r-proof"><div class="tight"><span>Proof of<br>Fin. Resp.</span><span class="yesno"><label><input type="checkbox">Yes</label><label><input type="checkbox">No</label></span><span class="yesno"><label><input type="checkbox">Expired</label><label><input type="checkbox">Exempt</label></span></div><div>26 Fin.<br>Resp. Type</div><div>Fin. Resp.<br>Name</div><div>Fin. Resp.<br>Num.</div></div>
    <div class="row r-phone"><div>Fin. Resp.<br>Phone Num.</div><div>27 Vehicle<br>Damage Rating 1<span class="ticks"></span></div><div>27 Vehicle<br>Damage Rating 2<span class="ticks"></span></div><div class="tight"><span>Vehicle<br>Inventoried</span><span class="yesno"><label><input type="checkbox">Yes</label><label><input type="checkbox">No</label></span></div></div>
    <div class="row r-towed"><div>Towed<br>By</div><div>Towed<br>To</div></div>
</template>

<script src="app.js"></script>
</body>
</html>
```
FILE: app.js
```js
document.querySelectorAll('[data-clone]').forEach(slot => {
    const source = document.getElementById(slot.dataset.clone);
    slot.appendChild(source.content.cloneNode(true));
});
```
FILE: styles.css
```css
* {
    box-sizing: border-box;
}
body {
    margin: 0;
    background: #e8eaed;
    color: #15181c;
    font-family: "Open Sans", "Noto Sans", sans-serif;
    font-size: 14px;
}
button {
    font: inherit;
    color: inherit;
    background: none;
    border: 0;
    padding: 0;
    display: flex;
    align-items: center;
    justify-content: center;
    flex-shrink: 0;
    white-space: nowrap;
}
a {
    color: inherit;
    text-decoration: none;
}
h1, h2, h3, h4, p, ul {
    margin: 0;
    padding: 0;
}
ul {
    list-style: none;
}
.sprite {
    position: absolute;
    width: 0;
    height: 0;
}
.icon {
    width: 22px;
    height: 22px;
    flex-shrink: 0;
    fill: none;
    stroke: currentColor;
    stroke-width: 2;
    stroke-linecap: round;
    stroke-linejoin: round;
}
.solid {
    fill: currentColor;
}
.app {
    display: flex;
    flex-direction: column;
    height: 100vh;
    overflow: hidden;
}

/* top bar */
.topbar {
    display: flex;
    align-items: center;
    height: 62px;
    flex-shrink: 0;
    border-bottom: 1px solid #d6d8dc;
}
.brand {
    width: 90px;
    height: 62px;
    padding-top: 9px;
    padding-right: 6px;
    flex-shrink: 0;
    border-right: 1px solid #d6d8dc;
    display: flex;
    flex-direction: column;
    align-items: center;
}
.brand-mark {
    width: 30px;
    height: 32px;
}
.brand-name {
    font: 15px/16px Roboto, sans-serif;
    color: #8a8d92;
}
.brand-name b {
    color: #1d4f9c;
    font-weight: 500;
}
.tools {
    display: flex;
    align-items: center;
    flex: 1;
    min-width: 0;
    overflow: hidden;
}
.group {
    display: flex;
    align-items: center;
    flex-shrink: 0;
    margin-left: 20px;
}
.group:nth-child(2) {
    margin-left: 10px;
}
.tool {
    width: 44px;
    height: 42px;
}
.tool.narrow {
    width: 30px;
}
.caret {
    width: 16px;
    height: 42px;
}
.caret .icon {
    width: 16px;
    height: 16px;
}
.danger {
    color: #c8102e;
}
.danger.trash {
    color: #d01f3c;
}
.close-doc {
    margin-left: 8px;
}
.tool.active {
    background: #005bd3;
    color: #fff;
    border-radius: 6px;
}
.session {
    width: 60px;
    margin-left: 12px;
    color: #5d6168;
    line-height: 21px;
}
.group.wide {
    margin-left: 29px;
}
.group.spaced {
    margin-left: 23px;
}
.outline-btn {
    margin-left: 4px;
    gap: 8px;
    font-size: 17px;
    padding: 0 10px 0 11px;
}
.pager {
    display: flex;
    flex-shrink: 0;
    width: 189px;
    height: 42px;
    margin-left: 29px;
    border: 1px solid #d3d6db;
    border-radius: 6px;
}
.pager button {
    width: 43px;
}
.pager-value {
    flex: 1;
    display: flex;
    align-items: center;
    justify-content: space-between;
    padding-right: 10px;
    border: solid #dcdee2;
    border-width: 0 1px;
    font-size: 16px;
    color: #5d6168;
    white-space: nowrap;
}
.pager-value input {
    width: 58px;
    padding: 0 0 0 8px;
    border: 0;
    background: none;
    text-align: center;
    font: inherit;
    color: #15181c;
}
.pager-value b {
    color: #15181c;
    font-weight: 600;
}
.stacked-group {
    margin-left: 30px;
}
.stacked {
    flex-direction: column;
    width: 50px;
    height: 48px;
    font-size: 11px;
    line-height: 14px;
    gap: 4px;
}
.stacked .icon {
    width: 20px;
    height: 20px;
}
.caret.ruled {
    width: 18px;
    height: 48px;
    border-left: 1px solid #dcdee2;
}
.black-square {
    width: 19px;
    height: 19px;
    background: #0c0d10;
    border-radius: 2px;
}
.group.clip {
    margin-left: 31px;
    margin-right: 2px;
    flex-shrink: 1;
    min-width: 0;
    overflow: hidden;
    gap: 3px;
    flex: 1;
}
.group.spaced + .spaced {
    margin-left: 26px;
}
.present-btn {
    width: 121px;
    height: 42px;
    gap: 8px;
    border-radius: 6px;
    background: #8cb1e2;
    color: #e6effa;
    font-size: 16px;
    font-weight: 600;
}
.tablet-btn {
    width: 62px;
    height: 42px;
    border: 1px solid #d3d6db;
    border-radius: 6px;
}
.account {
    display: flex;
    align-items: center;
    height: 61px;
    margin-left: 1px;
    padding: 0 8px;
    gap: 3px;
    border-left: 1px solid #d6d8dc;
}

/* tabs */
.tabs {
    display: flex;
    align-items: center;
    height: 47px;
    flex-shrink: 0;
    padding: 1px 0 0 6px;
    border-bottom: 1px solid #dddfe3;
}
.search {
    display: flex;
    align-items: center;
    gap: 7px;
    width: 250px;
    height: 31px;
    padding: 0 8px;
    background: #f8f9fd;
    border: 1px solid #d6d8dd;
    border-radius: 4px;
    color: #4b4f55;
    font-size: 15px;
}
.search .icon {
    width: 15px;
    height: 15px;
}
.search input {
    flex: 1;
    min-width: 0;
    padding: 0;
    border: 0;
    background: none;
    font: inherit;
}
.search input::placeholder {
    color: #72767c;
}
.tab {
    display: flex;
    align-items: center;
    align-self: flex-end;
    width: 284px;
    height: 41px;
    margin-left: 14px;
    padding: 0 15px 0 12px;
    background: #f8f9fd;
    border: 1px solid #dddfe3;
    border-bottom: 0;
    border-radius: 6px 6px 0 0;
}
.tab .icon {
    width: 16px;
    height: 16px;
    color: #4b4f55;
}
.tab a {
    flex: 1;
    margin-left: 7px;
    font-size: 15px;
    white-space: nowrap;
}
.tab-badge {
    padding: 0 6px;
    margin-right: 10px;
    border-radius: 4px;
    background: #c4d9f3;
    color: #1a5ab4;
    font-size: 11px;
    font-weight: 700;
    line-height: 16px;
}

/* presenting bar */
.presenting {
    display: flex;
    align-items: center;
    height: 62px;
    flex-shrink: 0;
    padding: 0 35px 0 90px;
    font-size: 20px;
}
.presenting strong {
    color: #1557b8;
    font-weight: 500;
    font-size: 20px;
}
.staged {
    display: flex;
    align-items: center;
    gap: 6px;
    height: 26px;
    margin-left: 12px;
    padding: 0 11px;
    border-radius: 4px;
    background: #07955f;
    color: #fff;
    font-size: 15px;
    font-weight: 700;
}
.staged .icon {
    width: 16px;
    height: 16px;
}
.doc-name {
    flex: 1;
    margin-left: 20px;
    font-size: 15px;
    color: #5d6168;
}
.presenting button {
    gap: 7px;
}
.presenting button .icon {
    width: 20px;
    height: 20px;
}
.publish {
    width: 127px;
    height: 46px;
    margin: 0 27px 0 26px;
    border-radius: 4px;
    background: #005bd3;
    color: #fff;
    font-size: 18px;
    font-weight: 600;
}
.exit {
    color: #c8102e;
    font-size: 18px;
}

/* workspace */
.workspace {
    flex: 1;
    min-height: 0;
    display: flex;
}
.palette {
    width: 89px;
    flex-shrink: 0;
    display: grid;
    grid-template: minmax(0, 1fr) 18px / 70px 19px;
    background: #fbfbfc;
    border-right: 1px solid #d6d8dc;
}
.palette-body {
    overflow: hidden;
    background: #e8eaed;
    padding: 11px 0 0 1px;
}
.locked {
    display: block;
    width: 64px;
    height: 20px;
    border-radius: 4px;
    background: #cbdaec;
    color: #2d67b3;
    font-size: 11px;
    line-height: 20px;
    text-align: center;
}
.palette h2 {
    width: 64px;
    font-size: 11px;
    line-height: 16px;
    font-weight: 400;
    color: #6a6e74;
    text-align: center;
    padding-top: 9px;
    height: 28px;
}
.palette h2.primary {
    height: 31px;
    padding-top: 11px;
    color: #33373c;
}
.palette h2.tall {
    height: 43px;
    padding-top: 23px;
}
.pal {
    position: relative;
    width: 72px;
    height: 63px;
    margin-bottom: 2px;
    flex-direction: column;
    gap: 3px;
    border-radius: 8px;
    font-size: 11px;
    line-height: 14px;
    color: #33373c;
}
.pal .icon, .laser {
    width: 22px;
    height: 22px;
    color: #101215;
}
.laser {
    fill: none;
    stroke: #101215;
    stroke-width: 2;
}
.laser circle {
    fill: #e53935;
    stroke: #e53935;
}
.pal.raised {
    width: 76px;
    padding: 0 4px 0 0;
    margin-right: -6px;
    background: #eff1f4;
    border: 1px solid #f6f7f9;
    border-left: 2px solid #c4c6ca;
    gap: 5px;
}
.pal.small-label {
    font-size: 10px;
}
.pal.on {
    width: 76px;
    padding-right: 4px;
    margin-bottom: 7px;
    background: #005bd3;
    color: #fff;
    gap: 5px;
    font-weight: 600;
}
.pal.on .icon {
    color: #fff;
}
.lock {
    position: absolute;
    left: -2px;
    bottom: -2px;
    width: 18px;
    height: 18px;
    border: 1px solid #9fc2ef;
    border-radius: 50%;
    background: #005bd3;
    display: flex;
    align-items: center;
    justify-content: center;
}
.pal .lock .icon {
    width: 11px;
    height: 11px;
}
.palette section {
    border-top: 1px solid #d6d8dc;
    margin-bottom: 8px;
}
.split {
    display: flex;
}
.split .pal {
    width: 56px;
    margin: 0;
    padding-left: 4px;
    border-right: 1px solid #d6d8dc;
    border-radius: 0;
    height: 65px;
}
.pal-caret {
    width: 18px;
}
.pal-caret .icon {
    width: 14px;
    height: 14px;
}
.redact {
    width: 19px;
    height: 13px;
    margin: 5px 0 4px;
    background: #000;
}
.palette .swatches {
    margin: 14px 0 0 -1px;
    padding: 10px;
}
.swatch {
    width: 46px;
    height: 46px;
    border: 2px solid #c5c7ca;
    border-radius: 6px;
    background: #e6ff00;
}

/* scroll bars */
.bar {
    display: flex;
    align-items: center;
    background: #fbfbfc;
    padding: 5px;
}
.bar.vertical {
    flex-direction: column;
    padding: 6px 0 5px;
}
.bar i {
    width: 0;
    height: 0;
    border: 6px solid transparent;
}
.bar.vertical i {
    border-bottom: 9px solid #868686;
    border-top: 0;
}
.bar.vertical i:last-child {
    border-bottom: 0;
    border-top: 9px solid #868686;
}
.bar.horizontal i {
    border-right: 9px solid #868686;
    border-left: 0;
}
.bar.horizontal i:last-child {
    border-right: 0;
    border-left: 9px solid #868686;
}
.track {
    flex: 1;
    display: flex;
    justify-content: center;
    margin: 9px 0;
}
.horizontal .track {
    margin: 0 9px;
    justify-content: flex-start;
}
.thumb {
    width: 12px;
    border-radius: 6px;
    background: #8a8a8a;
}
.horizontal .thumb {
    height: 12px;
}
.thumb.palette-y {
    height: 83%;
}
.thumb.pane-y {
    height: 97%;
}
.horizontal .pane-x {
    width: 76%;
}
.horizontal .palette-x {
    width: 100%;
}
.bar.small {
    padding: 0 5px 0 2px;
}

/* panes */
.pane {
    flex: 1;
    min-width: 0;
    display: grid;
    grid-template: minmax(0, 1fr) 18px / minmax(0, 1fr) 19px;
    background: #fbfbfc;
}
.pane .bar.horizontal {
    padding: 0 6px;
}
.stage {
    position: relative;
    overflow: hidden;
    background: #d4d6dc;
    padding-top: 16px;
}
.focused .stage::after {
    content: "";
    position: absolute;
    inset: 0;
    border-top: 3px solid #3a7fd5;
    border-left: 3px solid #3a7fd5;
}
.sheet {
    position: relative;
    width: 100%;
    max-width: 678px;
    height: 920px;
    margin: 0 auto;
    background: #737373;
    box-shadow: 0 0 26px rgba(0, 0, 0, .2);
    color: #151515;
    font: 7px/8px "Liberation Sans", Arial, sans-serif;
}
.sheet input[type="checkbox"] {
    appearance: none;
    width: 7px;
    height: 7px;
    margin: 0;
    flex-shrink: 0;
    border: 1px solid #202020;
}

/* crash report form */
.form-head {
    height: 109px;
    padding: 31px 30px 0 31px;
}
.use-only {
    display: flex;
    justify-content: space-between;
    height: 31px;
}
.use-only p {
    font-size: 6px;
}
.flags {
    display: flex;
    align-items: center;
    gap: 9px;
    height: 15px;
}
.flags label {
    display: flex;
    align-items: center;
    gap: 3px;
    line-height: 6px;
}
.totals {
    display: grid;
    grid-template-columns: 76fr 77fr 91fr;
    width: 244px;
    height: 24px;
    margin-top: 1px;
    border: 1px solid #202020;
    line-height: 7px;
}
.totals div {
    position: relative;
    padding: 1px;
}
.totals div + div {
    border-left: 1px solid #202020;
}
.title {
    display: flex;
    position: relative;
}
.txdot {
    width: 52px;
    height: 38px;
    flex-shrink: 0;
}
.txdot text {
    font: italic 4px "Liberation Sans", sans-serif;
    fill: #151515;
}
.title-text {
    flex: 1;
    text-align: center;
    font-size: 8px;
    line-height: 10px;
    white-space: nowrap;
    padding-right: 46px;
}
.title-text h1 {
    font-size: 8px;
    line-height: 10px;
}
.title-text p {
    display: flex;
    justify-content: center;
}
.page-of {
    position: absolute;
    right: 0;
    top: 34px;
}
.frame {
    margin: 0 29px 0 31px;
    border: 1px solid #151515;
}
.part {
    display: flex;
}
.part + .part {
    border-top: 1px solid #151515;
}
.ident {
    height: 255px;
    overflow: hidden;
}
.spine {
    width: 10px;
    flex-shrink: 0;
    display: flex;
    align-items: center;
    justify-content: center;
    border-right: 1px solid #151515;
    font: italic bold 7px/8px "Open Sans", sans-serif;
    white-space: nowrap;
}
.spine span, .code-spine span, .persons th span {
    writing-mode: vertical-rl;
    transform: rotate(180deg);
}
.ident .spine {
    align-items: flex-start;
    padding-top: 36px;
}
.vehicle .spine {
    align-items: flex-start;
    padding-top: 89px;
}
.rows {
    flex: 1;
    min-width: 0;
}
.row {
    display: grid;
    height: 22px;
    border-bottom: 1px solid #202020;
}
.row:nth-child(2) {
    height: 20px;
}
.row.r-dl, .row.r-veh, .row.r-rdwy {
    height: 21px;
}
[data-clone] .row:nth-child(n) {
    height: 22px;
}
.vehicle [data-clone] .row:nth-child(n) {
    height: 23px;
}
.row:last-child {
    border-bottom: 0;
}
.row > div {
    position: relative;
    padding: 3px 2px 2px;
    min-width: 0;
    white-space: nowrap;
}
.row > div + div {
    border-left: 1px solid #202020;
}
.row small {
    font-size: 4px;
}
.row .tight {
    display: flex;
    align-items: center;
    gap: 4px;
    padding: 0 2px;
    font-size: 6px;
    line-height: 7px;
}
.r-veh .tight {
    line-height: 6px;
}
.yesno label {
    display: flex;
    align-items: center;
    gap: 2px;
    height: 8px;
    font-size: 7px;
}
.ticks {
    position: absolute;
    right: 3px;
    bottom: 0;
    width: calc(100% - 60px);
    height: 6px;
    background: repeating-linear-gradient(90deg, #202020 0 1px, transparent 1px 16px);
}
.totals .ticks {
    right: 1px;
    width: 54px;
}
.r-date .ticks {
    width: 80px;
}
.r-veh .ticks {
    width: 64px;
}
.r-opinion .ticks {
    width: calc(100% - 42px);
}
.r-unit .ticks {
    width: calc(100% - 18px);
}
.rows h3 {
    height: 12px;
    padding-left: 2px;
    border-bottom: 1px solid #202020;
    font: italic bold 7px/11px "Liberation Sans", sans-serif;
    white-space: nowrap;
}
.r-date { grid-template-columns: 352fr 290fr 381fr 378fr; }
.r-county { grid-template-columns: 608fr 683fr 110fr; }
.r-opinion { grid-template-columns: 383fr 490fr 528fr; }
.r-rdwy { grid-template-columns: 157fr 183fr 153fr 182fr 150fr 402fr 174fr; }
.r-private { grid-template-columns: 285fr 116fr 225fr 125fr 137fr 513fr; }
.r-at { grid-template-columns: 100fr 155fr 147fr 138fr 159fr 159fr 369fr 174fr; }
.r-owner { grid-template-columns: 103fr 1298fr; }
.r-proof { grid-template-columns: 212fr 190fr 394fr 605fr; }
.r-phone { grid-template-columns: 416fr 412fr 412fr 161fr; }
.r-towed { grid-template-columns: 495fr 906fr; }
.r-unit { grid-template-columns: 107fr 120fr 91fr 94fr 154fr 211fr 624fr; }
.r-veh { grid-template-columns: 195fr 217fr 328fr 280fr 192fr 189fr; }
.r-dl { grid-template-columns: 149fr 137fr 286fr 124fr 163fr 154fr 388fr; }

/* persons table */
.persons {
    width: 100%;
    table-layout: fixed;
    border-collapse: collapse;
}
.persons col {
    width: 19px;
}
.persons col.result {
    width: 24px;
}
.persons col.name {
    width: auto;
}
.persons th, .persons td {
    padding: 0;
    border: 1px solid #202020;
    border-right: 0;
    border-top: 0;
    font-weight: 400;
}
.persons th:first-child, .persons td:first-child {
    border-left: 0;
}
.persons th {
    height: 32px;
    vertical-align: bottom;
    font: 6px/8px "DejaVu Sans", sans-serif;
}
.persons th.name-head {
    vertical-align: middle;
    font: 7px/10px "Open Sans", sans-serif;
}
.persons th span {
    display: inline-block;
    vertical-align: top;
    white-space: nowrap;
    text-align: left;
}
.persons td {
    height: 18px;
}
.persons td.na {
    text-align: center;
    font: 6px/8px "Open Sans", sans-serif;
}
.lit {
    background: #fff;
    height: 105px;
}
.lit .first td {
    background: #f0ff72;
}

/* callouts */
.callout {
    position: absolute;
}
.callout header {
    height: 13px;
    padding-left: 4px;
    border-radius: 3px 3px 0 0;
    background: rgba(0, 0, 0, .87);
    color: #fff;
    font: bold 8px/13px "Liberation Sans", sans-serif;
}
.callout-body {
    display: flex;
    margin-top: 1px;
    background: #fff;
    overflow: hidden;
}
.callout-form {
    left: -47px;
    top: 250px;
    width: 774px;
}
.callout-form .callout-body {
    height: 137px;
    padding-top: 4px;
    border-left: 2px solid #333;
    border-right: 1px solid #333;
}
.callout-form .spine {
    width: 12px;
    height: 130px;
    border-top: 1px solid #333;
    font-size: 8px;
}
.callout-form .persons {
    border-top: 1px solid #333;
}
.callout-form .persons col {
    width: 24px;
}
.callout-form .persons col.result {
    width: 28px;
}
.callout-form .persons col.name {
    width: auto;
}
.callout-form .persons th {
    height: 41px;
    font: 8px/11px "Open Sans", sans-serif;
}
.callout-form .persons th.name-head {
    font-size: 9px;
    line-height: 11px;
}
.callout-form .persons td {
    height: 22px;
}
.callout-form .persons td.na {
    font-size: 7px;
    line-height: 10px;
}
.callout-form .first td {
    background: #f0ff72;
}
.beam {
    position: absolute;
    fill: rgba(255, 255, 255, .45);
}
.beam .edge {
    fill: none;
    stroke: rgba(255, 255, 255, .6);
}
.beam-form {
    left: -47px;
    top: 401px;
    width: 774px;
    height: 71px;
}
.beam-codes {
    left: -36px;
    top: 375px;
    width: 398px;
    height: 132px;
}
.callout-restrict {
    left: -36px;
    top: 31px;
    width: 392px;
}
.callout-restrict .callout-body {
    height: 330px;
}
.big-list {
    flex: 1;
    white-space: nowrap;
    color: #222;
}
.callout-restrict .big-list {
    margin-left: 6px;
    padding: 4px 0 0 3px;
    border-left: 2px solid #444;
    font-size: 15px;
    line-height: 18px;
}
.sheet mark {
    background: #f0ff72;
    color: inherit;
}
.callout-restrict h4 {
    font-size: 17px;
    line-height: 18px;
}
.callout-restrict mark {
    display: inline-block;
    height: 16px;
    line-height: 16px;
    padding-right: 10px;
}
.callout .cut {
    width: 6px;
    padding: 2px 0 0;
    font-size: 15px;
    line-height: 18px;
    color: #555;
}
.callout-person {
    left: -24px;
    top: 493px;
    width: 387px;
}
.callout-person .callout-body {
    height: 252px;
    padding: 9px 0 1px 6px;
}
.callout-person .big-list {
    border: 2px solid #555;
    padding: 2px 3px;
    font-size: 19px;
    line-height: 23px;
}
.callout-person h4 {
    font-size: 22px;
    line-height: 26px;
}
.callout-person mark {
    display: inline-block;
    height: 22px;
    line-height: 22px;
    padding-right: 6px;
}

/* code sheet */
.codes {
    font-size: 8px;
    line-height: 9px;
}
.codes-head {
    display: flex;
    justify-content: space-between;
    height: 54px;
    padding: 22px 23px 0 22px;
    white-space: nowrap;
}
.codes-head p:last-child {
    text-align: right;
}
.code-frame {
    display: flex;
    margin: 0 22px 0 21px;
    height: 806px;
    border: 1px solid #202020;
}
.code-spine {
    width: 17px;
    flex-shrink: 0;
    padding-top: 396px;
    border-right: 1px solid #202020;
    font: italic bold 9px/16px "Liberation Sans", sans-serif;
    white-space: nowrap;
}
.code-rows {
    flex: 1;
    min-width: 0;
}
.code-row {
    display: grid;
    white-space: nowrap;
    border-bottom: 1px solid #202020;
}
.code-row:last-child {
    border-bottom: 0;
}
.cell {
    position: relative;
    padding: 0 1px;
    min-width: 0;
}
.cell + .cell, .drug + .cell {
    border-left: 1px solid #202020;
}
.codes .cell h4 {
    font-size: 9px;
    line-height: 11px;
}
.pair {
    display: grid;
    grid-template-columns: 84fr 80fr;
}
.pair .second {
    padding-top: 10px;
}
.c-street {
    height: 116px;
    grid-template-columns: 352fr 99fr 165fr;
}
.explain {
    padding: 58px 0 0 299px;
}
.c-license {
    height: 141px;
    grid-template-columns: 369fr 68fr 79fr 100fr;
}
.body-style {
    padding: 9px 0 0 298px;
}
.c-restrict {
    height: 265px;
    grid-template-columns: 388fr 228fr;
}
.restrict-left {
    display: flex;
    flex-direction: column;
}
.restrict-top {
    height: 168px;
    display: grid;
    grid-template-columns: 195fr 193fr;
}
.restrict-bottom {
    flex: 1;
    display: grid;
    grid-template-columns: 151fr 237fr;
    border: solid #202020;
    border-width: 1px 1px 0 0;
}
.restrict-bottom .pair {
    grid-template-columns: 115fr 121fr;
}
.bright {
    background: #fff;
}
.spread {
    display: flex;
    flex-direction: column;
    justify-content: space-between;
}
.p-list {
    height: 242px;
    padding-left: 3px;
}
.c-restraint {
    height: 78px;
    grid-template-columns: 332fr 201fr 83fr;
}
.tail {
    padding: 39px 4px 0 0;
    text-align: right;
}
.c-restraint .pair {
    grid-template-columns: 116fr 84fr;
}
.c-damage {
    height: 205px;
    grid-template-columns: 93fr 115fr 114fr 294fr;
}
.drug {
    display: grid;
    grid-template-rows: 1fr 53px;
}
.drug .cell + .cell {
    border-left: 0;
    border-top: 1px solid #202020;
}
.bottom {
    display: flex;
    align-items: flex-end;
    padding-bottom: 4px;
}
.insurance {
    padding-bottom: 30px;
}
.damage .spread {
    height: 121px;
}
.car {
    position: absolute;
    right: 2px;
    top: 15px;
    width: 132px;
    height: 190px;
}
.car-lines {
    fill: none;
    stroke: #202020;
}
.car-arrows {
    fill: #101010;
}
.car-text {
    font: 5px "Liberation Sans", sans-serif;
    fill: #202020;
}
.pointer {
    position: absolute;
    left: 499px;
    top: 698px;
    width: 38px;
    height: 38px;
}
```
